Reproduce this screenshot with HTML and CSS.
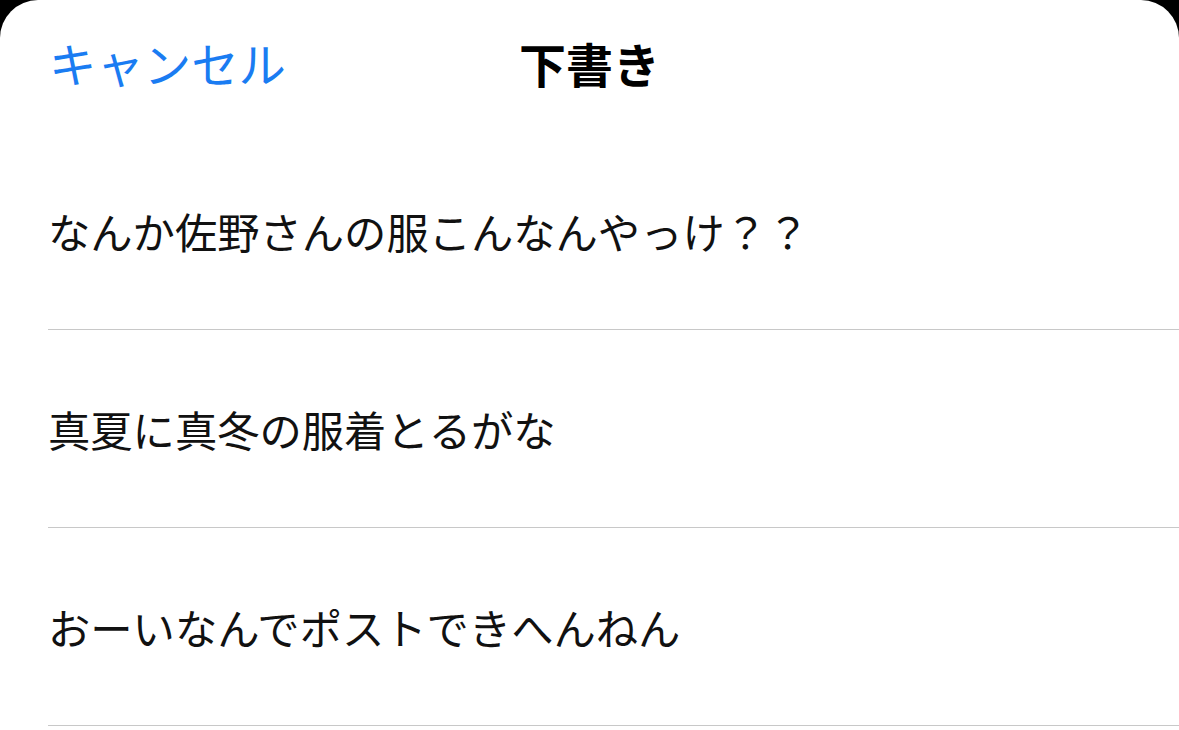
FILE: index.html
```html
<!DOCTYPE html>
<html lang="ja">
<head>
    <meta charset="UTF-8">
    <meta name="viewport" content="width=device-width, initial-scale=1.0">
    <title>下書き</title>
    <link rel="stylesheet" href="styles.css">
</head>
<body>

    <div class="sheet">
        <div class="header">
            <span class="cancel">キャンセル</span>
            <h1>下書き</h1>
            <span></span>
        </div>

        <ul class="drafts">
            <li>なんか佐野さんの服こんなんやっけ？？</li>
            <li>真夏に真冬の服着とるがな</li>
            <li>おーいなんでポストできへんねん</li>
        </ul>
    </div>

</body>
</html>
```

FILE: styles.css
```css
body {
    font-family: "Noto Sans CJK JP", "Noto Sans", sans-serif;
    background-color: #000;
    margin: 0;
    padding: 0;
}

.sheet {
    height: 730px;
    background-color: #fff;
    border-radius: 38px 38px 0 0;
    overflow: hidden;
}

.header {
    display: grid;
    grid-template-columns: 1fr auto 1fr;
    align-items: center;
    height: 133px;
    padding-bottom: 6px;
    box-sizing: border-box;
}

.cancel {
    padding-left: 49px;
    font-size: 47.4px;
    color: #1a7cf2;
    line-height: 1.2;
}

h1 {
    margin: 0;
    font-size: 47px;
    font-weight: bold;
    color: #000;
    line-height: 1.2;
}

.drafts {
    list-style: none;
    margin: 0 0 0 48px;
    padding: 0;
}

.drafts li {
    display: flex;
    align-items: center;
    height: 197px;
    padding-top: 1px;
    box-sizing: border-box;
    border-bottom: 1px solid #c8c8c8;
    font-size: 42.3px;
    color: #111;
    line-height: 1.2;
}

.drafts li + li {
    height: 198px;
}
```
